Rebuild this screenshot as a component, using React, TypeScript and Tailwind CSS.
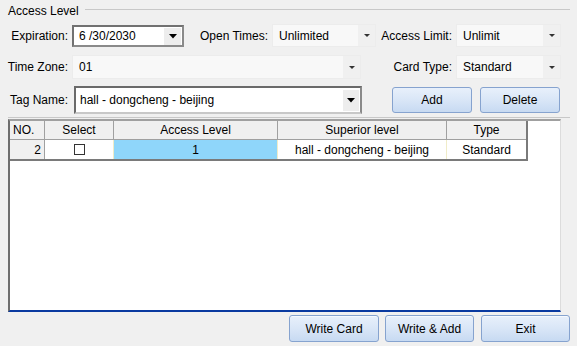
import React from "react";

const Arrow = ({ big = false }: { big?: boolean }) =>
  big ? (
    <svg width="8" height="5" viewBox="0 0 8 5"><path d="M0 0H8L4 4.5Z" fill="#000" /></svg>
  ) : (
    <svg width="6" height="3" viewBox="0 0 6 3"><path d="M0 0H6L3 3Z" fill="#333" /></svg>
  );

const FlatCombo = ({ w, h, text }: { w: string; h: string; text: string }) => (
  <div className={`${w} ${h} flex items-center bg-[#f8f8f8] border border-[#ececec]`}>
    <span className="flex-1 pl-[6px] text-black">{text}</span>
    <div className="w-[17px] h-full flex items-center justify-center bg-[#f0f0f0]">
      <Arrow />
    </div>
  </div>
);

const Btn = ({ w, text }: { w: string; text: string }) => (
  <div
    className={`${w} h-[27px] flex items-center justify-center rounded-[3px] border border-[#86a3cf] bg-gradient-to-b from-[#e8f0fb] via-[#d9e6f7] to-[#c7daf2] text-black shadow-[inset_0_1px_0_#f6f9fe]`}
  >
    {text}
  </div>
);

export default function App() {
  return (
    <div
      className="w-[577px] h-[346px] bg-[#f0f0f0] text-[12px] text-black flex flex-col overflow-hidden"
      style={{ fontFamily: '"Liberation Sans", Arial, sans-serif' }}
    >
      {/* group header */}
      <div className="flex items-start h-[20px] pl-[8px] pr-[7px] pt-[5px]">
        <span className="pr-[6px] leading-none">Access Level</span>
        <div className="flex-1 h-0 border-t border-[#c8c8c8] mt-[4px]" />
      </div>

      {/* row 1 */}
      <div className="flex items-center mt-[4px] h-[23px]">
        <div className="w-[68px] text-right">Expiration:</div>
        <div className="ml-[4px] w-[112px] h-[22px] flex items-center bg-white border-2 border-t-[#717171] border-l-[#717171] border-r-[#8a8a8a] border-b-[#8a8a8a]">
          <span className="flex-1 pl-[5px]">6 /30/2030</span>
          <div className="w-[18px] h-[18px] mr-[1px] flex items-center justify-center bg-[#ededed] border-l border-t border-white">
            <Arrow big />
          </div>
        </div>
        <div className="w-[84px] text-right">Open Times:</div>
        <div className="ml-[4px]">
          <FlatCombo w="w-[104px]" h="h-[23px]" text="Unlimited" />
        </div>
        <div className="w-[76px] text-right">Access Limit:</div>
        <div className="ml-[4px]">
          <FlatCombo w="w-[105px]" h="h-[23px]" text="Unlimit" />
        </div>
      </div>

      {/* row 2 */}
      <div className="flex items-center mt-[8px] h-[24px]">
        <div className="w-[68px] text-right">Time Zone:</div>
        <div className="ml-[4px]">
          <FlatCombo w="w-[289px]" h="h-[24px]" text="01" />
        </div>
        <div className="w-[91px] text-right">Card Type:</div>
        <div className="ml-[4px]">
          <FlatCombo w="w-[105px]" h="h-[24px]" text="Standard" />
        </div>
      </div>

      {/* row 3 */}
      <div className="flex items-center mt-[7px] h-[28px]">
        <div className="w-[68px] text-right">Tag Name:</div>
        <div className="ml-[6px] w-[288px] h-[28px] flex items-center bg-white border-2 border-t-[#6a6a6a] border-l-[#6a6a6a] border-r-[#8a8a8a] border-b-[#c8c8c8]">
          <span className="flex-1 pl-[4px]">hall - dongcheng - beijing</span>
          <div className="w-[17px] h-[22px] mr-[1px] flex items-center justify-center bg-[#ededed] border-l border-t border-white">
            <Arrow big />
          </div>
        </div>
        <div className="ml-[30px] w-[80px]">
          <div className="w-[80px] h-[26px] flex items-center justify-center rounded-[3px] border border-[#86a3cf] bg-gradient-to-b from-[#e8f0fb] via-[#d9e6f7] to-[#c7daf2]">Add</div>
        </div>
        <div className="ml-[8px] w-[80px] h-[26px] flex items-center justify-center rounded-[3px] border border-[#86a3cf] bg-gradient-to-b from-[#e8f0fb] via-[#d9e6f7] to-[#c7daf2]">Delete</div>
      </div>

      {/* group bottom line */}
      <div className="ml-[8px] mr-[7px] mt-[3px] h-0 border-t border-[#c8c8c8]" />

      {/* table */}
      <div className="ml-[8px] mt-[1px] w-[553px] h-[193px] bg-white border-t-2 border-t-[#a0a0a0] border-l-2 border-l-[#6e6e6e] border-r border-r-[#dcdcdc] border-b-2 border-b-[#0a3aa0]">
        <div className="w-[518px] border-r-2 border-r-[#7a7a7a] border-b-2 border-b-[#7a7a7a]">
          <div className="flex h-[19px] bg-[#f0f0f0] border-b border-[#a0a0a0]">
            <div className="w-[35px] pl-[3px] flex items-center border-r border-[#a0a0a0]">NO.</div>
            <div className="w-[69px] flex items-center justify-center border-r border-[#a0a0a0]">Select</div>
            <div className="w-[164px] flex items-center justify-center border-r border-[#a0a0a0]">Access Level</div>
            <div className="w-[169px] flex items-center justify-center border-r border-[#a0a0a0]">Superior level</div>
            <div className="flex-1 flex items-center justify-center">Type</div>
          </div>
          <div className="flex h-[19px]">
            <div className="w-[35px] pr-[3px] flex items-center justify-end bg-[#f0f0f0] border-r border-[#a0a0a0]">2</div>
            <div className="w-[69px] flex items-center justify-center bg-white border-r border-[#f0ecc8]">
              <div className="w-[11px] h-[11px] border border-[#333] bg-white" />
            </div>
            <div className="w-[164px] flex items-center justify-center bg-[#8fd6fa] border-r border-[#f0ecc8]">1</div>
            <div className="w-[169px] flex items-center justify-center bg-white border-r border-[#f0ecc8]">hall - dongcheng - beijing</div>
            <div className="flex-1 flex items-center justify-center bg-white">Standard</div>
          </div>
        </div>
      </div>

      {/* bottom buttons */}
      <div className="flex mt-[3px] ml-[289px] gap-[6px]">
        <Btn w="w-[90px]" text="Write Card" />
        <Btn w="w-[89px]" text="Write & Add" />
        <div className="ml-[1px]">
          <Btn w="w-[89px]" text="Exit" />
        </div>
      </div>
    </div>
  );
}
